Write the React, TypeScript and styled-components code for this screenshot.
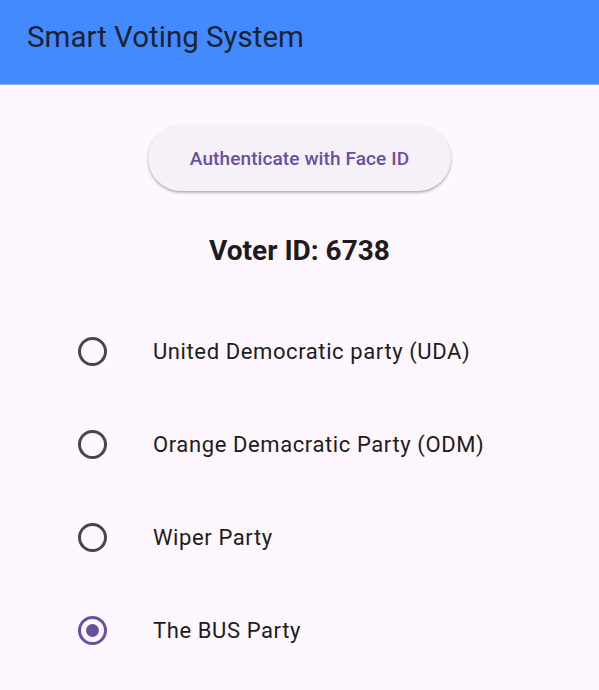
import React, { useState } from "react";
import styled, { createGlobalStyle } from "styled-components";

const Global = createGlobalStyle`
  html, body { margin: 0; padding: 0; background: #fef7ff; }
  body { font-family: Roboto, "Noto Sans", sans-serif; }
  * { box-sizing: border-box; }
`;

const Page = styled.div`
  width: 599px;
  min-height: 690px;
  background: #fef7ff;
  display: flex;
  flex-direction: column;
`;

const AppBar = styled.header`
  height: 85px;
  background: #448aff;
  display: flex;
  align-items: center;
  padding-left: 27px;
  padding-bottom: 10px;
  border-bottom: 1px solid #8fb0e6;
`;

const Title = styled.h1`
  margin: 0;
  font-family: Roboto, sans-serif;
  font-weight: 400;
  font-size: 29.5px;
  color: #1b2233;
  letter-spacing: 0;
`;

const Body = styled.main`
  display: flex;
  flex-direction: column;
  align-items: center;
  padding-top: 40px;
`;

const AuthButton = styled.button`
  width: 303px;
  height: 66px;
  border: none;
  border-radius: 33px;
  background: #f6f1f8;
  box-shadow: 0 2px 3px rgba(0, 0, 0, 0.22), 0 1px 2px rgba(0, 0, 0, 0.12);
  color: #6750a4;
  font-family: Roboto, sans-serif;
  font-weight: 500;
  font-size: 19px;
  letter-spacing: 0.1px;
  cursor: pointer;
`;

const VoterId = styled.div`
  margin-top: 41px;
  font-family: Roboto, sans-serif;
  font-weight: 700;
  font-size: 28px;
  color: #1d1b20;
  height: 38px;
  line-height: 38px;
`;

const List = styled.div`
  align-self: stretch;
  margin-top: 35px;
  display: flex;
  flex-direction: column;
`;

const Row = styled.label`
  height: 93px;
  display: flex;
  align-items: center;
  padding-left: 78px;
  cursor: pointer;
`;

const RadioOuter = styled.span<{ $on: boolean }>`
  width: 29px;
  height: 29px;
  border-radius: 50%;
  border: 3px solid ${(p) => (p.$on ? "#6750a4" : "#49454f")};
  display: flex;
  align-items: center;
  justify-content: center;
  flex-shrink: 0;
`;

const RadioDot = styled.span`
  width: 13px;
  height: 13px;
  border-radius: 50%;
  background: #6750a4;
`;

const Label = styled.span`
  margin-left: 46px;
  font-family: Roboto, sans-serif;
  font-size: 22px;
  letter-spacing: 0.6px;
  color: #1d1b20;
`;

const parties = [
  "United Democratic party (UDA)",
  "Orange Demacratic Party (ODM)",
  "Wiper Party",
  "The BUS Party",
];

export default function App() {
  const [sel, setSel] = useState(3);
  return (
    <Page>
      <Global />
      <AppBar>
        <Title>Smart Voting System</Title>
      </AppBar>
      <Body>
        <AuthButton>Authenticate with Face ID</AuthButton>
        <VoterId>Voter ID: 6738</VoterId>
        <List>
          {parties.map((p, i) => (
            <Row key={p} onClick={() => setSel(i)}>
              <RadioOuter $on={sel === i}>{sel === i && <RadioDot />}</RadioOuter>
              <Label>{p}</Label>
            </Row>
          ))}
        </List>
      </Body>
    </Page>
  );
}
